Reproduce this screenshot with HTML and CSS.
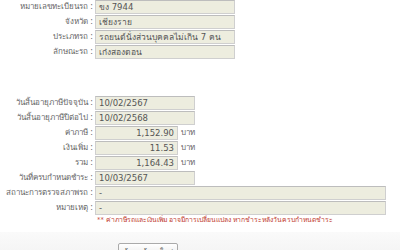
FILE: index.html
```html
<!DOCTYPE html>
<html lang="th">
<head>
  <meta charset="UTF-8" />
  <title>ข้อมูลภาษีรถ</title>
  <link rel="stylesheet" href="styles.css">
</head>
<body>
  <div class="page">
    <!-- ข้อมูลรถ -->
    <div class="form-group">
      <label class="label">หมายเลขทะเบียนรถ :</label>
      <div class="field wide">ขง 7944</div>
      <label class="label">จังหวัด :</label>
      <div class="field wide">เชียงราย</div>
      <label class="label">ประเภทรถ :</label>
      <div class="field wide">รถยนต์นั่งส่วนบุคคลไม่เกิน 7 คน</div>
      <label class="label">ลักษณะรถ :</label>
      <div class="field wide">เก๋งสองตอน</div>
    </div>

    <!-- ข้อมูลภาษี -->
    <div class="form-group tax">
      <label class="label">วันสิ้นอายุภาษีปัจจุบัน :</label>
      <div class="field date">10/02/2567</div>
      <label class="label">วันสิ้นอายุภาษีปีต่อไป :</label>
      <div class="field date">10/02/2568</div>
      <label class="label">ค่าภาษี :</label>
      <div class="money"><div class="field amount">1,152.90</div><span class="unit">บาท</span></div>
      <label class="label">เงินเพิ่ม :</label>
      <div class="money"><div class="field amount">11.53</div><span class="unit">บาท</span></div>
      <label class="label">รวม :</label>
      <div class="money"><div class="field amount">1,164.43</div><span class="unit">บาท</span></div>
      <label class="label">วันที่ครบกำหนดชำระ :</label>
      <div class="field date">10/03/2567</div>
      <label class="label">สถานะการตรวจสภาพรถ :</label>
      <div class="field full">-</div>
      <label class="label">หมายเหตุ :</label>
      <div class="field full">-</div>
      <span></span>
      <p class="note">** ค่าภาษีรถและเงินเพิ่ม อาจมีการเปลี่ยนแปลง หากชำระหลังวันครบกำหนดชำระ</p>
    </div>

    <div class="actions">
      <button class="btn">ค้นหาข้อมูลใหม่</button>
    </div>
  </div>
</body>
</html>
```

FILE: styles.css
```css
/* Base */
* {
  margin: 0;
  padding: 0;
  box-sizing: border-box;
}
body {
  font-family: Tahoma, "DejaVu Sans", "Noto Sans", sans-serif;
  font-size: 8.5px;
  color: #555;
  background: #fff;
  overflow: hidden;
}
.page {
  width: 400px;
}
/* Form rows */
.form-group {
  display: grid;
  grid-template-columns: 95px auto;
  row-gap: 1px;
  align-items: center;
  justify-items: start;
}
.form-group.tax {
  margin-top: 37px;
}
.label {
  justify-self: end;
  padding-right: 2px;
  font-size: 8px;
  line-height: 12px;
  color: #666;
  white-space: nowrap;
}
.field {
  height: 14px;
  line-height: 12px;
  padding: 0 3px;
  background: #ededdf;
  border: 1px solid #cfcfcf;
  border-top-color: #bdbdbd;
  color: #555;
  white-space: nowrap;
  overflow: hidden;
}
.field.wide {
  width: 140px;
}
.field.date {
  width: 100px;
}
.field.full {
  width: 291px;
}
.money {
  display: flex;
  align-items: center;
  gap: 3px;
}
.field.amount {
  width: 83px;
  text-align: right;
}
.unit {
  font-size: 8px;
  line-height: 12px;
  color: #666;
}
.note {
  margin-top: 0;
  padding-left: 2px;
  font-size: 6.8px;
  line-height: 9px;
  color: #c0392b;
  white-space: nowrap;
}
/* Bottom action bar */
.actions {
  margin-top: 7px;
  height: 30px;
  padding-top: 11px;
  padding-left: 118px;
  background: linear-gradient(#fafafa, #f2f2f2);
}
.btn {
  width: 60px;
  height: 16px;
  font: inherit;
  font-size: 7px;
  color: #444;
  background: linear-gradient(#fff, #e8e8e8);
  border: 1px solid #aaa;
  border-radius: 2px;
}
```
